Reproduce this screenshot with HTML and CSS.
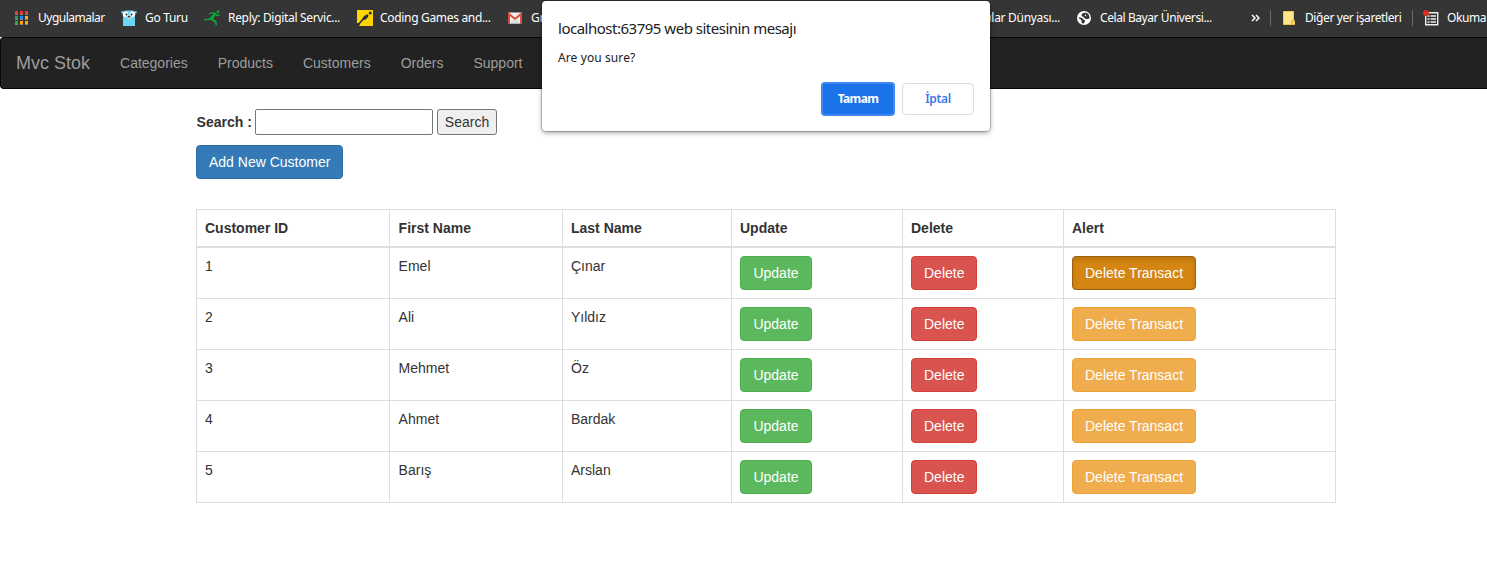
FILE: index.html
```html
<!DOCTYPE html>
<html lang="tr">
<head>
<meta charset="utf-8">
<title>Mvc Stok</title>
<link rel="stylesheet" href="styles.css">
</head>
<body>
<div class="bookmarks">
  <div class="bm bm-apps">
    <svg width="14" height="14" viewBox="0 0 14 14"><path fill="#858585" d="M1 3h3v1H1zM6 3h3v1H6zM11 3h3v1h-3zM1 8h3v1H1zM6 8h3v1H6zM11 8h3v1h-3zM1 13h3v1H1zM6 13h3v1H6zM11 13h3v1h-3z"/><path fill="#f4382f" d="M1 0h3v3H1zM6 0h3v3H6zM11 0h3v3h-3z"/><path fill="#2fa24f" d="M1 5h3v3H1zM1 10h3v3H1z"/><path fill="#1a8cff" d="M6 5h3v3H6z"/><path fill="#f9ab00" d="M11 5h3v3h-3zM6 10h3v3H6zM11 10h3v3h-3z"/></svg>
    <span>Uygulamalar</span>
  </div>
  <div class="bm bm-go">
    <svg width="16" height="16" viewBox="0 0 16 16"><path fill="#6ad7f5" d="M2 16V4Q2 1 5 .6h6Q14 1 14 4v12z"/><circle cx="1.500" cy="2.200" r="1.200" fill="#6ad7f5"/><circle cx="14.500" cy="2.200" r="1.200" fill="#6ad7f5"/><circle cx="4.500" cy="4.200" r="2.700" fill="#fff"/><circle cx="11.500" cy="4.200" r="2.700" fill="#fff"/><circle cx="5.500" cy="4.400" r="1" fill="#222"/><circle cx="10.500" cy="4.400" r="1" fill="#222"/><ellipse cx="8" cy="8" rx="1.800" ry="1.300" fill="#e8d3b4"/><ellipse cx="8" cy="6.800" rx="1.200" ry=".8" fill="#222"/></svg>
    <span>Go Turu</span>
  </div>
  <div class="bm bm-reply">
    <svg width="16" height="16" viewBox="0 0 16 16"><circle cx="14" cy="1.800" r="1.500" fill="#0ca83b"/><path d="M5.200 3.800 8.500 2.800l3 .8 1.500 2 2.800-.8" fill="none" stroke="#0ca83b" stroke-width="1.200"/><path d="m9 2.600 3 1.200-2.700 5.400 3 1.600.8 4.700h-1.300L10.500 12 7 10 0 10.200V9.300l5.300-.8L9 4.500z" fill="#0ca83b"/></svg>
    <span>Reply: Digital Servic...</span>
  </div>
  <div class="bm bm-coding">
    <svg width="16" height="16" viewBox="0 0 16 16"><path fill="#ffd500" d="M0 0h16v16H0z"/><path d="m1 15 6-7 4-3" fill="none" stroke="#252e38" stroke-width="1.600"/><ellipse cx="8.500" cy="7.300" rx="3.500" ry="1.700" transform="rotate(-43 8.500 7.300)" fill="#252e38"/><circle cx="13.200" cy="3" r="1.500" fill="#252e38"/><path d="m0 13 3 .5L2.200 16H0z" fill="#252e38"/></svg>
    <span>Coding Games and...</span>
  </div>
  <div class="bm bm-gmail">
    <svg width="14" height="12" viewBox="0 0 14 12"><rect width="14" height="11" y=".5" rx="1" fill="#eee"/><path d="M1 11V2l6 5 6-5v9" fill="none" stroke="#dd4b39" stroke-width="2"/><path d="M2 11.500 5.500 7 7 8l1.500-1 3.500 4.500z" fill="#ddd"/></svg>
    <span>Gmail</span>
  </div>
  <div class="bm bm-world"><span>Yazılımcılar Dünyası...</span></div>
  <div class="bm bm-celal">
    <svg width="14" height="14" viewBox="0 0 14 14"><circle cx="7" cy="7" r="7" fill="#fff"/><path d="M9 1.700C6 1.300 4.300 3 4.500 4.500S7 5.500 7.500 7s2 1.300 5 .5C12.700 4.500 11.500 2.500 9 1.700zM8.500 3l-.8 1.700L9.500 5.500z" fill="#353535" fill-rule="evenodd"/><path d="M1.500 6.500c2-.3 3.500 0 4.300 1.300S8.500 9 8 10.300s-1 1-1 2.200C4 12.300 4.500 11 4.500 9.500S2 8.500 1.500 6.500z" fill="#353535"/></svg>
    <span>Celal Bayar Üniversi...</span>
  </div>
  <svg class="more" width="9" height="8" viewBox="0 0 9 8"><path d="m1 1 3 3-3 3M5 1l3 3-3 3" fill="none" stroke="#fff" stroke-width="1.500"/></svg>
  <i class="sep sep-a"></i>
  <div class="bm bm-other">
    <svg width="12" height="14" viewBox="0 0 12 14"><path d="M.5.500h10v9h1v4H.5z" fill="#ffe48a" stroke="#efc54b"/><path d="M9 13.500V10h2.500" fill="none" stroke="#d9a52c"/></svg>
    <span>Diğer yer işaretleri</span>
  </div>
  <i class="sep sep-b"></i>
  <div class="bm bm-read">
    <svg width="16" height="16" viewBox="0 0 16 16"><path d="M2.700 2.700h12v12h-12z" fill="none" stroke="#eee" stroke-width="1.400"/><path d="M4.500 6h2M7.500 6H13M4.500 9h2M7.500 9H13M4.500 12h2M7.500 12H13" stroke="#eee" stroke-width="1.300"/><circle cx="3" cy="3" r="3" fill="#d93025"/></svg>
    <span>Okuma</span>
  </div>
</div>
<nav class="navbar">
  <a class="brand">Mvc Stok</a>
  <a>Categories</a><a>Products</a><a>Customers</a><a>Orders</a><a>Support</a>
</nav>
<main class="container">
  <form class="search"><b>Search :</b><input type="text"><button type="button">Search</button></form>
  <a class="btn primary">Add New Customer</a>
  <table class="customers">
    <colgroup><col class="c1"><col class="c2"><col class="c3"><col class="c4"><col class="c5"><col class="c6"></colgroup>
    <thead><tr><th>Customer ID</th><th>First Name</th><th>Last Name</th><th>Update</th><th>Delete</th><th>Alert</th></tr></thead>
    <tbody>
      <tr><td>1</td><td>Emel</td><td>Çınar</td><td><a class="btn success">Update</a></td><td><a class="btn danger">Delete</a></td><td><a class="btn warning active">Delete Transact</a></td></tr>
      <tr><td>2</td><td>Ali</td><td>Yıldız</td><td><a class="btn success">Update</a></td><td><a class="btn danger">Delete</a></td><td><a class="btn warning">Delete Transact</a></td></tr>
      <tr><td>3</td><td>Mehmet</td><td>Öz</td><td><a class="btn success">Update</a></td><td><a class="btn danger">Delete</a></td><td><a class="btn warning">Delete Transact</a></td></tr>
      <tr><td>4</td><td>Ahmet</td><td>Bardak</td><td><a class="btn success">Update</a></td><td><a class="btn danger">Delete</a></td><td><a class="btn warning">Delete Transact</a></td></tr>
      <tr><td>5</td><td>Barış</td><td>Arslan</td><td><a class="btn success">Update</a></td><td><a class="btn danger">Delete</a></td><td><a class="btn warning">Delete Transact</a></td></tr>
    </tbody>
  </table>
</main>
<div class="dialog">
  <div class="dialog-title">localhost:63795 web sitesinin mesajı</div>
  <div class="dialog-text">Are you sure?</div>
  <div class="dialog-actions"><button class="ok">Tamam</button><button class="cancel">İptal</button></div>
</div>
</body>
</html>
```
FILE: styles.css
```css
* { box-sizing: border-box; }
body { margin: 0; height: 563px; overflow: hidden; background: #fff; color: #333; font: 14px/20px "Liberation Sans", Arial, sans-serif; }
.bookmarks { display: flex; align-items: center; height: 37px; padding: 0 0 1px 14px; background: #353535; overflow: hidden; color: #fff; font: 12px/16px "Noto Sans", sans-serif; }
.bm { display: flex; align-items: center; flex: none; height: 36px; white-space: nowrap; }
.bm svg { flex: none; }
.bm span { padding-bottom: 1px; }
.bm-apps { width: 107px; gap: 10px; letter-spacing: -.5px; }
.bm-go { width: 83px; gap: 8px; letter-spacing: -.3px; }
.bm-reply { width: 153px; gap: 8px; letter-spacing: -.32px; }
.bm-coding { width: 151px; gap: 7px; letter-spacing: -.32px; }
.bm-gmail { width: 430px; gap: 9px; }
.bm-world { width: 139px; justify-content: flex-end; padding-right: 17px; letter-spacing: -.3px; }
.bm-celal { width: 174px; gap: 9px; letter-spacing: -.42px; }
.more { flex: none; }
.sep { flex: none; width: 1px; height: 16px; background: #6b6b6b; }
.sep-a { margin: 0 12px 0 10px; }
.bm-other { width: 129px; gap: 10px; letter-spacing: -.4px; }
.sep-b { margin-right: 10px; }
.bm-read { gap: 8px; letter-spacing: -.4px; }
.navbar { display: flex; align-items: center; height: 52px; padding-left: 15px; background: #222; border: 1px solid #080808; border-right: 0; border-radius: 4px 0 0 4px; color: #9d9d9d; }
.navbar a { margin-right: 30px; }
.navbar .brand { font-size: 18px; }
.container { width: 1140px; margin: 20px 0 0 196px; }
.search { display: flex; align-items: center; height: 26px; margin-bottom: 10px; }
.search b { width: 55px; padding-left: .6px; white-space: nowrap; }
.search input { width: 178px; height: 26px; margin: 0 4px; padding: 1px 2px; border: 1px solid #767676; border-radius: 2px; }
.search button { width: 60px; height: 26px; padding: 0; border: 1px solid #767676; border-radius: 3px; background: #efefef; color: #333; font: inherit; }
.btn { display: inline-block; vertical-align: middle; padding: 6px 12px; border: 1px solid; border-radius: 4px; color: #fff; white-space: nowrap; }
.primary { display: table; background: #337ab7; border-color: #2e6da4; }
.success { width: 72px; text-align: center; background: #5cb85c; border-color: #4cae4c; }
.danger { background: #d9534f; border-color: #d43f3a; }
.warning { background: #f0ad4e; border-color: #eea236; }
.warning.active { background: #d58512; border-color: #985f0d; box-shadow: inset 0 3px 5px rgba(0,0,0,.125); }
.customers { width: 1139px; margin-top: 30px; table-layout: fixed; border-collapse: collapse; }
.customers th, .customers td { padding: 8px; border: 1px solid #ddd; text-align: left; vertical-align: top; }
.customers th { border-bottom-width: 2px; }
.customers tr > :nth-child(2) { padding-left: 8.600px; }
.c1 { width: 193px; }
.c2 { width: 173px; }
.c3 { width: 169px; }
.c4 { width: 171px; }
.c5 { width: 161px; }
.c6 { width: 272px; }
.dialog { position: absolute; left: 542px; top: 1px; width: 448px; height: 130px; padding: 17px 16px 16px; border-radius: 4px; background: #fff; color: #202124; box-shadow: 0 0 0 1px rgba(0,0,0,.2), 0 2px 5px rgba(0,0,0,.35); font-family: "Noto Sans", sans-serif; }
.dialog-title { font-size: 15px; line-height: 20px; letter-spacing: -.49px; }
.dialog-text { margin-top: 12px; font-size: 12px; line-height: 16px; letter-spacing: .1px; }
.dialog-actions { display: flex; justify-content: flex-end; align-items: center; gap: 7px; margin-top: 16px; }
.dialog button { height: 32px; border-radius: 4px; padding: 0; font: bold 12px/16px "Noto Sans", sans-serif; letter-spacing: -.6px; }
.dialog .ok { width: 74px; height: 34px; border: 2px solid #4285f4; background: #1a73e8; color: #fff; }
.dialog .cancel { width: 72px; border: 1px solid #dadce0; background: #fff; color: #3b78e7; font-weight: 600; letter-spacing: -.3px; }
```
